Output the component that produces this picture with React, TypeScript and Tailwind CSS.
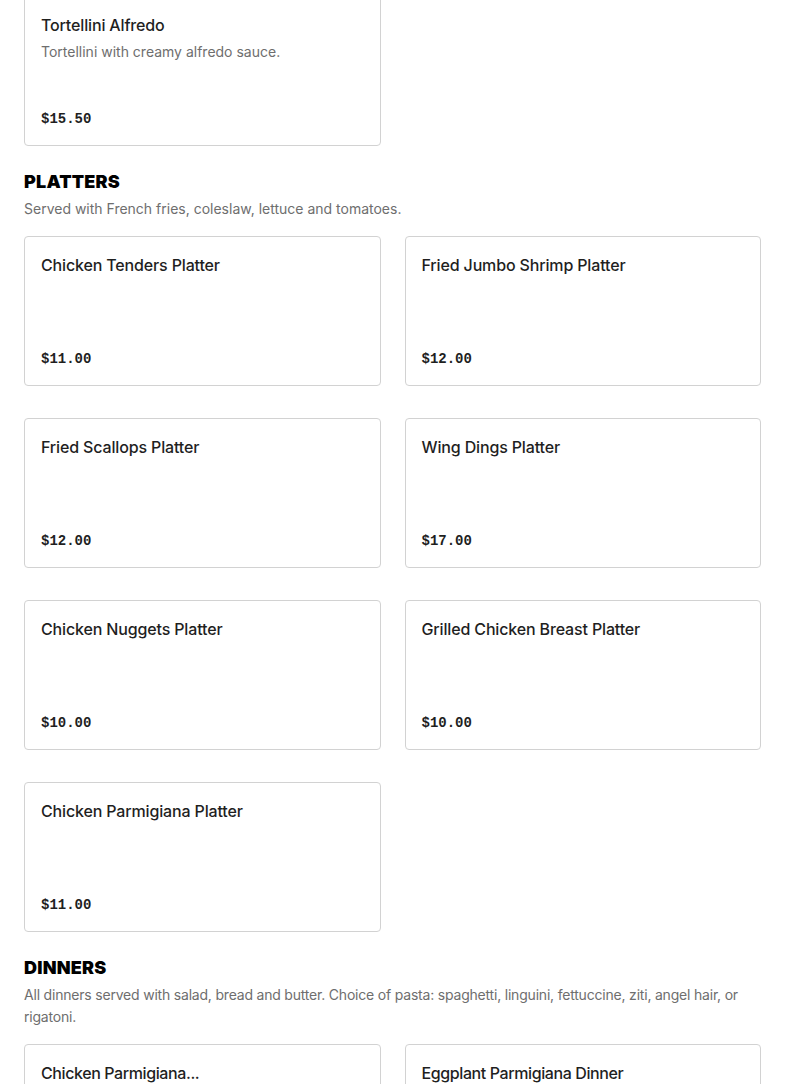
import React from 'react';

type Item = { name: string; description?: string; price: string };

type Section = { title?: string; description?: string; items: Item[]; narrow?: boolean };

const sections: Section[] = [
  {
    items: [{ name: 'Tortellini Alfredo', description: 'Tortellini with creamy alfredo sauce.', price: '$15.50' }],
  },
  {
    title: 'Platters',
    description: 'Served with French fries, coleslaw, lettuce and tomatoes.',
    items: [
      { name: 'Chicken Tenders Platter', price: '$11.00' },
      { name: 'Fried Jumbo Shrimp Platter', price: '$12.00' },
      { name: 'Fried Scallops Platter', price: '$12.00' },
      { name: 'Wing Dings Platter', price: '$17.00' },
      { name: 'Chicken Nuggets Platter', price: '$10.00' },
      { name: 'Grilled Chicken Breast Platter', price: '$10.00' },
      { name: 'Chicken Parmigiana Platter', price: '$11.00' },
    ],
  },
  {
    title: 'Dinners',
    description:
      'All dinners served with salad, bread and butter. Choice of pasta: spaghetti, linguini, fettuccine, ziti, angel hair, or rigatoni.',
    narrow: true,
    items: [
      { name: 'Chicken Parmigiana...', price: '$16.00' },
      { name: 'Eggplant Parmigiana Dinner', price: '$15.00' },
    ],
  },
];

const MenuCard: React.FC<{ item: Item; narrow?: boolean }> = ({ item, narrow }) => (
  <div className="h-[150px] rounded border border-[#d2d2d2] bg-white p-4 flex flex-col justify-between">
    <div>
      <h4
        className={`text-[16px] leading-6 font-medium text-[#1f1f1f] ${narrow ? 'tracking-[-0.4px]' : 'tracking-[-0.15px]'}`}
      >
        {item.name}
      </h4>
      {item.description && (
        <p className="mt-[5px] text-[14px] leading-5 text-[#6e6e6e]">{item.description}</p>
      )}
    </div>
    <span className="font-['Liberation_Mono',monospace] font-bold text-[14px] leading-5 text-[#1f1f1f]">
      {item.price}
    </span>
  </div>
);

export default function App() {
  return (
    <div className="min-h-screen bg-white px-6 font-['Inter',sans-serif] overflow-hidden h-[1084px]">
      {sections.map((section, i) => (
        <section key={i} className={i === 0 ? '-mt-[4px]' : 'mt-[22px]'}>
          {section.title && (
            <>
              <h3 className="text-[18px] leading-7 font-black uppercase text-black tracking-[0.2px]">
                {section.title}
              </h3>
              <p
                className={`mt-[2px] mb-4 text-[14px] leading-[22px] text-[#6e6e6e] ${section.narrow ? 'tracking-[-0.2px]' : ''}`}
              >
                {section.description}
              </p>
            </>
          )}
          <div className="grid grid-cols-2 gap-x-6 gap-y-8">
            {section.items.map(item => (
              <MenuCard key={item.name} item={item} narrow={section.narrow} />
            ))}
          </div>
        </section>
      ))}
    </div>
  );
}
